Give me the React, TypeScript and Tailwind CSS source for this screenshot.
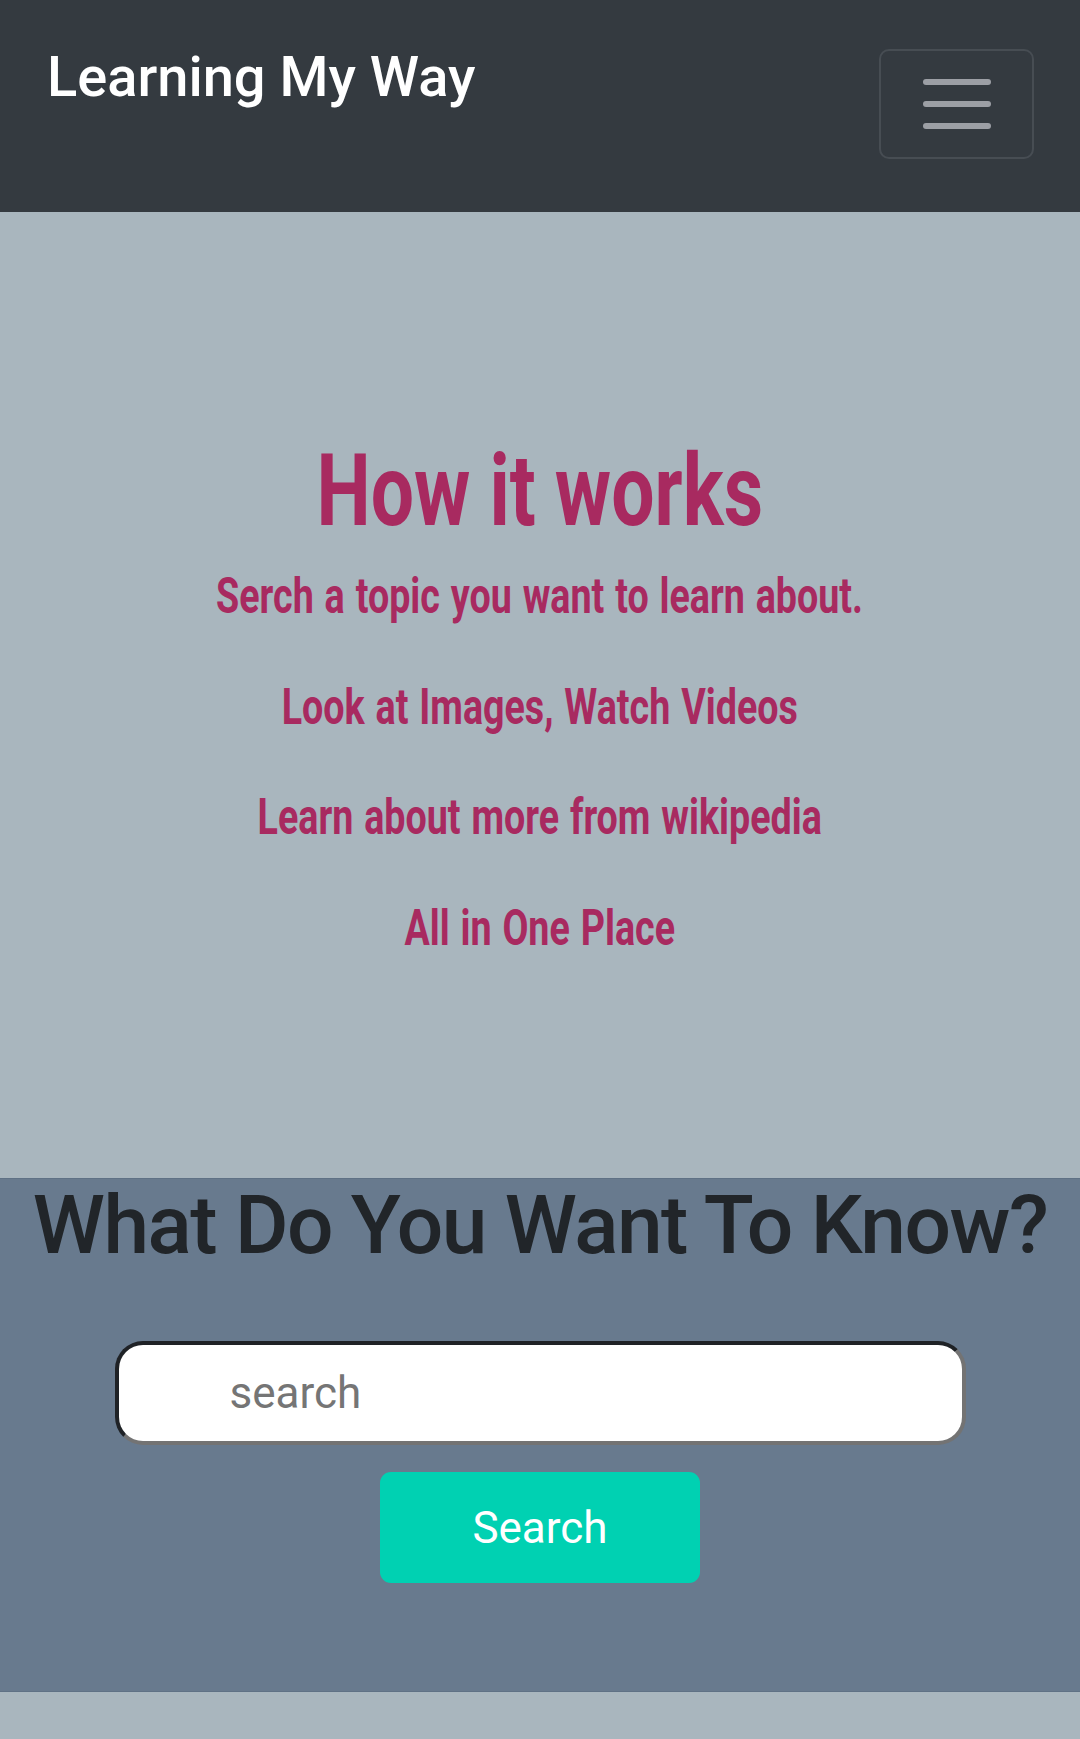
import React, { useState } from 'react';

const steps = [
  'Serch a topic you want to learn about.',
  'Look at Images, Watch Videos',
  'Learn about more from wikipedia',
  'All in One Place',
];

const Navbar: React.FC = () => (
  <nav className="h-[212px] bg-[#343a40] flex items-start justify-between pt-[49px] pl-[47px] pr-[46px]">
    <a href="#" className="text-white text-[56px] leading-none font-medium font-['Roboto',sans-serif]">
      Learning My Way
    </a>
    <button
      type="button"
      aria-label="Toggle navigation"
      className="w-[155px] h-[110px] border-2 border-[#474d53] rounded-[10px] flex flex-col items-center justify-center gap-[16px]"
    >
      <span className="block w-[68px] h-[6px] rounded-full bg-[#9c9fa5]" />
      <span className="block w-[68px] h-[6px] rounded-full bg-[#9c9fa5]" />
      <span className="block w-[68px] h-[6px] rounded-full bg-[#9c9fa5]" />
    </button>
  </nav>
);

// no condensed face installed, so Roboto Bold is squeezed sideways to look like Oswald
const HowItWorks: React.FC = () => (
  <section className="h-[966px] flex flex-col items-center pt-[228px] text-[#a82a60] font-['Roboto',sans-serif] font-bold">
    <h1 className="text-[101px] leading-none scale-x-[0.76] whitespace-nowrap">How it works</h1>
    <div className="flex flex-col items-center">
      {steps.map((step) => (
        <p key={step} className="text-[50px] leading-[110.5px] scale-x-[0.753] [word-spacing:2px] whitespace-nowrap">
          {step}
        </p>
      ))}
    </div>
  </section>
);

const SearchBox: React.FC = () => {
  const [query, setQuery] = useState('');

  return (
    <section className="h-[514px] bg-[#687a8e] border-t border-b border-[#5f7185] flex flex-col items-center pt-[5px] font-['Roboto',sans-serif]">
      <h2 className="text-[82px] leading-none font-medium tracking-[-1.5px] text-[#212529] whitespace-nowrap">
        What Do You Want To Know?
      </h2>
      <input
        value={query}
        onChange={(e) => setQuery(e.target.value)}
        placeholder="search"
        className="mt-[75px] w-[851px] h-[104px] bg-white rounded-[28px] border-[4px] border-t-[#1f2226] border-l-[#1f2226] border-b-[#737373] border-r-[#737373] pl-[111px] text-[44px] text-[#333] placeholder:text-[#757575] outline-none"
      />
      <button
        type="button"
        className="mt-[27px] w-[320px] h-[111px] bg-[#00d1b2] rounded-[11px] text-white text-[44px]"
      >
        Search
      </button>
    </section>
  );
};

export default function App() {
  return (
    <div className="min-h-screen bg-[#a9b6be]">
      <Navbar />
      <HowItWorks />
      <SearchBox />
    </div>
  );
}
